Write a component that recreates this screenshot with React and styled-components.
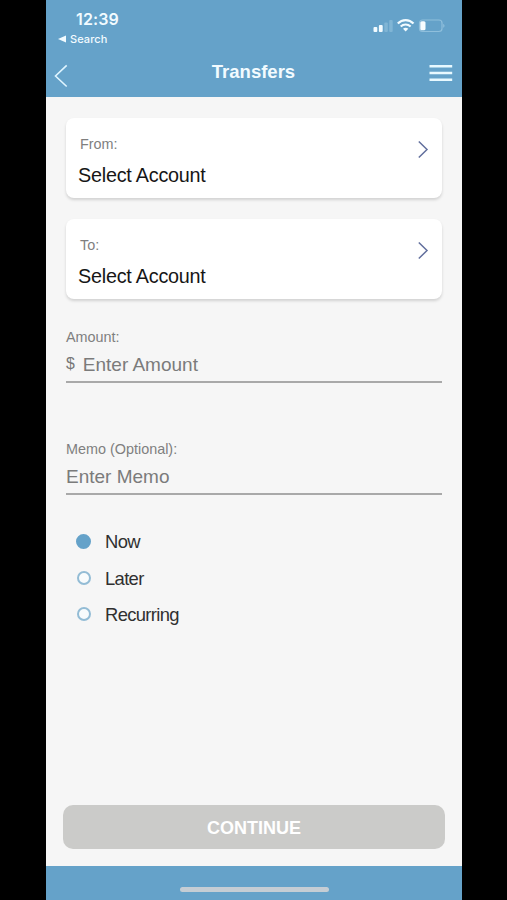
import { useState } from "react";
import styled, { createGlobalStyle } from "styled-components";

const GlobalStyle = createGlobalStyle`
    * {
        box-sizing: border-box;
    }

    body {
        margin: 0;
        background: #000;
        font-family: "Liberation Sans", Arial, sans-serif;
    }

    button {
        border: none;
        background: none;
        padding: 0;
        font-family: inherit;
    }
`;

/* ====== Screen ====== */
const Screen = styled.div`
    display: flex;
    flex-direction: column;
    width: 416px;
    height: 900px;
    margin-left: 46px;
    background: #f6f6f6;
    overflow: hidden;
`;

/* ====== Header ====== */
const Header = styled.header`
    height: 97px;
    flex: none;
    background: #65a2c9;
    color: #f2fbff;
`;

const StatusBar = styled.div`
    display: flex;
    justify-content: space-between;
    height: 50px;
    padding: 10px 17px 0 12px;
    font-family: Inter, sans-serif;
`;

const Clock = styled.div`
    padding-left: 18px;
    font-size: 16px;
    line-height: 18px;
    font-weight: 600;
    letter-spacing: 0.15px;
`;

const BackToApp = styled.div`
    display: flex;
    align-items: center;
    gap: 4px;
    margin-top: 4px;
    font-size: 11px;
    line-height: 14px;
    font-weight: 500;
    letter-spacing: 0.1px;
`;

const StatusIcons = styled.svg`
    display: block;
    margin-top: 8px;
`;

const NavBar = styled.nav`
    display: grid;
    grid-template-columns: 40px 1fr 40px;
    align-items: center;
    height: 46px;
    padding: 0 9px 0 8px;
`;

const NavButton = styled.button`
    display: flex;
    justify-content: ${(props) => (props.$right ? "flex-end" : "flex-start")};
    padding-top: ${(props) => (props.$right ? "0" : "5px")};
`;

const Title = styled.h1`
    margin: 0;
    padding-bottom: 2px;
    font-size: 18.5px;
    line-height: 22px;
    font-weight: bold;
    text-align: center;
`;

/* ====== Form ====== */
const Form = styled.main`
    display: flex;
    flex-direction: column;
    flex: 1;
    padding: 21px 17px 17px 17px;
`;

const AccountCard = styled.section`
    display: flex;
    justify-content: space-between;
    height: 80px;
    margin: 0 3px 21px 3px;
    padding: 17px 13px 0 12px;
    border-radius: 8px;
    background: #fff;
    box-shadow: 0 2px 3px rgba(0, 0, 0, 0.15);
`;

const Label = styled.div`
    padding-left: ${(props) => (props.$inset ? "2px" : "0")};
    font-size: 14.4px;
    line-height: 18px;
    color: #7f7f7f;
`;

const AccountName = styled.div`
    margin-top: 11px;
    font-size: 19.8px;
    line-height: 22px;
    letter-spacing: -0.23px;
    color: #161616;
`;

const Arrow = styled.svg`
    display: block;
    margin-top: 5px;
`;

const Field = styled.label`
    display: block;
    height: 55px;
    margin: ${(props) => props.$top} 3px 0 3px;
    border-bottom: 2px solid #a9a9a9;
`;

const FieldRow = styled.div`
    display: flex;
    align-items: center;
    gap: 8px;
    height: 22px;
    margin-top: 8px;
    color: #777;
`;

const Currency = styled.span`
    padding-bottom: 2px;
    font-size: 15.8px;
`;

const Input = styled.input`
    flex: 1;
    min-width: 0;
    height: 22px;
    padding: 0;
    border: none;
    outline: none;
    background: none;
    font-family: inherit;
    font-size: 19px;
    color: #161616;

    &::placeholder {
        color: #7b7b7b;
        opacity: 1;
    }
`;

const Options = styled.div`
    display: flex;
    flex-direction: column;
    gap: 14.5px;
    margin: 36px 0 0 13px;
`;

const Option = styled.label`
    display: flex;
    align-items: center;
    gap: 14px;
    height: 22px;
    font-size: 18.4px;
    letter-spacing: -0.65px;
    color: #303030;
`;

const Radio = styled.input`
    appearance: none;
    width: 14px;
    height: 14px;
    margin: 0 0 2px 1px;
    border: 2px solid #93bcd5;
    border-radius: 50%;
    background: #f8fbfc;

    &:checked {
        width: 15px;
        height: 15px;
        margin-left: 0;
        border-color: #65a2c9;
        background: #65a2c9;
    }
`;

const ContinueButton = styled.button`
    height: 44px;
    margin-top: auto;
    padding-top: 2px;
    border-radius: 10px;
    background: #cbcbc9;
    color: #fff;
    font-size: 18px;
    font-weight: bold;
`;

/* ====== Footer ====== */
const Footer = styled.footer`
    display: flex;
    justify-content: center;
    height: 34px;
    flex: none;
    padding-top: 21px;
    background: #65a2c9;
`;

const HomeIndicator = styled.div`
    width: 149px;
    height: 5px;
    border-radius: 3px;
    background: #c5cdd4;
`;

const AccountPicker = (props) => (
    <AccountCard>
        <div>
            <Label $inset>{props.label}</Label>
            <AccountName>Select Account</AccountName>
        </div>
        <Arrow width="12" height="19" viewBox="0 0 12 19" fill="none">
            <path d="M1.8 1.5L10 9.5L1.8 17.5" stroke="#626f9d" strokeWidth="1.5" />
        </Arrow>
    </AccountCard>
);

const App = () => {
    const [schedule, setSchedule] = useState("Now");

    return (
        <>
            <GlobalStyle />
            <Screen>
                <Header>
                    <StatusBar>
                        <div>
                            <Clock>12:39</Clock>
                            <BackToApp>
                                <svg width="8" height="8" viewBox="0 0 8 8">
                                    <path d="M0 4L8 0.5V7.5Z" fill="#f2fbff" />
                                </svg>
                                Search
                            </BackToApp>
                        </div>
                        <StatusIcons width="73" height="15" viewBox="0 0 73 15" fill="none">
                            {/* signal */}
                            <rect x="1.5" y="9" width="3.8" height="5" rx="1" fill="#f2fbff" />
                            <rect x="6.9" y="7" width="3.8" height="7" rx="1" fill="#f2fbff" />
                            <rect x="12.3" y="4.5" width="3.5" height="9.5" rx="1" fill="#80b5d5" />
                            <rect x="17.2" y="2" width="3.5" height="12" rx="1" fill="#80b5d5" />
                            {/* wifi */}
                            <path d="M25.8 5.5C30.2 0.9 37.1 0.9 41.5 5.5" stroke="#f2fbff" strokeWidth="2.2" />
                            <path d="M28.7 8.5C31.5 5.8 35.8 5.8 38.6 8.5" stroke="#f2fbff" strokeWidth="2.1" />
                            <path d="M31 10.8C32.5 9.4 34.8 9.4 36.3 10.8L33.65 13.6Z" fill="#f2fbff" />
                            {/* battery */}
                            <rect x="47.5" y="2" width="22.5" height="11.5" rx="3" stroke="#8fbfdc" strokeWidth="1.2" />
                            <rect x="48.3" y="3.2" width="5.2" height="9" rx="1.5" fill="#f8fdff" />
                            <path d="M71.2 5.7C73 6.6 73 8.9 71.2 9.8Z" fill="#8fbfdc" />
                        </StatusIcons>
                    </StatusBar>
                    <NavBar>
                        <NavButton aria-label="Back">
                            <svg width="14" height="24" viewBox="0 0 14 24" fill="none">
                                <path d="M12.7 1.3L1.5 12L12.7 22.5" stroke="#dff5ff" strokeWidth="1.6" />
                            </svg>
                        </NavButton>
                        <Title>Transfers</Title>
                        <NavButton $right aria-label="Menu">
                            <svg width="24" height="18" viewBox="0 0 24 18" fill="none">
                                <path d="M0.5 2.3H23.2M0.5 9H23.2M0.5 15.7H23.2" stroke="#e8f9ff" strokeWidth="2.4" />
                            </svg>
                        </NavButton>
                    </NavBar>
                </Header>

                <Form>
                    <AccountPicker label="From:" />
                    <AccountPicker label="To:" />

                    <Field $top="8px">
                        <Label>Amount:</Label>
                        <FieldRow>
                            <Currency>$</Currency>
                            <Input placeholder="Enter Amount" />
                        </FieldRow>
                    </Field>
                    <Field $top="57px">
                        <Label>Memo (Optional):</Label>
                        <FieldRow>
                            <Input placeholder="Enter Memo" />
                        </FieldRow>
                    </Field>

                    <Options>
                        {["Now", "Later", "Recurring"].map((name) => (
                            <Option key={name}>
                                <Radio
                                    type="radio"
                                    name="schedule"
                                    checked={schedule === name}
                                    onChange={() => setSchedule(name)}
                                />
                                {name}
                            </Option>
                        ))}
                    </Options>

                    <ContinueButton>CONTINUE</ContinueButton>
                </Form>

                <Footer>
                    <HomeIndicator />
                </Footer>
            </Screen>
        </>
    );
};

export default App;
